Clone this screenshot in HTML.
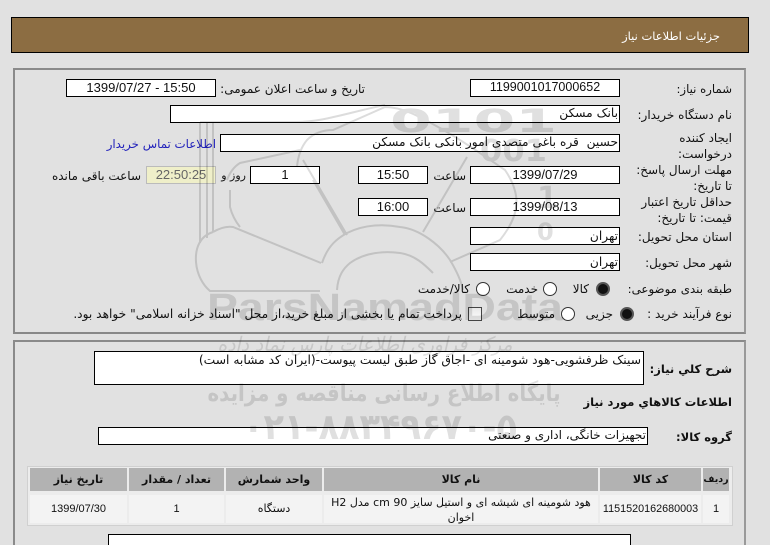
<!DOCTYPE html>
<html lang="fa"><head><meta charset="utf-8"><title>جزئیات اطلاعات نیاز</title>
<style>
html,body{margin:0;padding:0;width:770px;height:545px;overflow:hidden}
body{background:#e1e1e1;font-family:"DejaVu Sans","Liberation Sans",sans-serif;font-size:12px;color:#111}
#w{position:absolute;left:0;top:0;width:770px;height:545px;overflow:hidden;isolation:isolate;background:#e1e1e1}
.a{position:absolute;box-sizing:border-box;white-space:nowrap}
.p{position:absolute;box-sizing:border-box;border:2px solid #8a8a8a;border-right-color:#999;border-bottom-color:#888}
.i{position:absolute;box-sizing:border-box;height:18px;background:#fff;border:1px solid #000;line-height:15px;font-size:13px;text-align:center;white-space:nowrap;overflow:hidden;font-family:"Liberation Sans","DejaVu Sans",sans-serif;z-index:2}
.r{text-align:right;direction:rtl;padding-right:1px;font-family:"DejaVu Sans",sans-serif;font-size:12.2px}
.l{position:absolute;direction:rtl;text-align:right;white-space:nowrap;line-height:14px;z-index:2}
.rd{position:absolute;width:14px;height:14px;border-radius:50%;border:1px solid #333;background:#fff;box-sizing:border-box;z-index:2}
.rd.on{background:#111;box-shadow:inset 0 0 0 1px #111;border:2px solid #555}
.h,.c{position:absolute;box-sizing:border-box;text-align:center;z-index:2;white-space:nowrap}
.h{top:468px;height:23px;background:#b2b2b2;font-weight:bold;line-height:23px;font-size:11px}
.c{top:495px;height:28px;background:#f3f3f3;line-height:28px;font-size:11px}
.n{font-family:"Liberation Sans",sans-serif}
svg{position:absolute;left:0;top:0;z-index:5;mix-blend-mode:multiply}
</style></head>
<body><div id="w">
<div class="a" style="left:11px;top:17px;width:738px;height:36px;background:#8c6d42;border:1px solid #000"></div>
<div class="l" style="right:50px;top:29px;color:#fff;font-size:11.5px">جزئیات اطلاعات نیاز</div>

<div class="p" style="left:13px;top:68px;width:733px;height:266px"></div>
<div class="p" style="left:13px;top:340px;width:733px;height:215px"></div>

<svg width="770" height="545" viewBox="0 0 770 545">
<g fill="none" stroke="#dcdcdc" stroke-width="2">
<path d="M200 243V122M207 238V122M213 232V122"/>
<path d="M200 122H293C320 123 350 112 385 105"/>
<path d="M213 232C200 236 195 248 196 262C197 275 203 285 210 291H320"/>
<path d="M213 232C220 228 227 226 233 227L321 263"/>
<path d="M313 180L345 235"/>
<path d="M347 235L303 160"/>
<path d="M322 263C328 245 338 238 347 233C365 224 385 224 400 227C420 229 440 245 450 260C456 270 461 280 463 290"/>
<path d="M337 290C338 275 344 268 350 263C365 252 385 251 400 253C415 255 425 265 433 273"/>
<path d="M230 190V207C232 215 236 222 240 227M227 180C230 172 235 166 240 163L300 150"/>
<path d="M297 167C298 155 302 146 307 140C315 132 325 130 333 130L385 107C405 107 425 120 440 128C465 142 490 160 505 170C522 195 520 215 500 240L450 262"/>
<path d="M423 232L467 157"/>
</g>
<g fill="#e0e0e0" font-family="'DejaVu Sans',sans-serif" font-weight="bold">
<text x="390" y="132" font-size="32" textLength="167" lengthAdjust="spacingAndGlyphs">0101</text>
<text x="480" y="161" font-size="30" textLength="67" lengthAdjust="spacingAndGlyphs">001</text>
<text x="537" y="208" font-size="30">1</text>
<text x="537" y="240" font-size="24">0</text>
<text x="207" y="320" font-size="38" textLength="356" lengthAdjust="spacingAndGlyphs" font-family="'Liberation Sans',sans-serif">ParsNamadData</text>
<text x="384" y="401" font-size="23" text-anchor="middle" style="direction:rtl" textLength="353" lengthAdjust="spacingAndGlyphs">پایگاه اطلاع رسانی مناقصه و مزایده</text>
<text x="243" y="439" font-size="36" textLength="274" lengthAdjust="spacingAndGlyphs" style="direction:ltr;unicode-bidi:bidi-override">۰۲۱-۸۸۳۴۹۶۷۰-۵</text>
</g>
<text x="365" y="351" font-size="20" text-anchor="middle" fill="#e2e2e2" font-family="'DejaVu Sans',sans-serif" font-style="italic" style="direction:rtl" textLength="295" lengthAdjust="spacingAndGlyphs">مرکز فراوری اطلاعات پارس نماد داده</text>
</svg>

<div class="l" style="right:38px;top:82px;font-size:11.7px">شماره نیاز:</div>
<div class="i" style="left:470px;top:79px;width:150px;font-size:12.5px">1199001017000652</div>
<div class="l" style="right:405px;top:82px">تاریخ و ساعت اعلان عمومی:</div>
<div class="i" style="left:66px;top:79px;width:150px">1399/07/27 - 15:50</div>

<div class="l" style="right:38px;top:108px">نام دستگاه خریدار:</div>
<div class="i r" style="left:170px;top:105px;width:450px">بانک مسکن</div>

<div class="l" style="right:38px;top:130px;line-height:16px">ایجاد کننده<br>درخواست:</div>
<div class="i r" style="left:220px;top:134px;width:400px">حسین&nbsp; قره باغی متصدی امور بانکی بانک مسکن</div>
<div class="l" style="right:554px;top:137px;color:#2222bb;font-size:11.8px">اطلاعات تماس خریدار</div>

<div class="l" style="right:38px;top:162px;line-height:16px">مهلت ارسال پاسخ:<br>تا تاریخ:</div>
<div class="i" style="left:470px;top:166px;width:150px">1399/07/29</div>
<div class="l" style="right:304px;top:169px">ساعت</div>
<div class="i" style="left:358px;top:166px;width:70px">15:50</div>
<div class="i" style="left:250px;top:166px;width:70px">1</div>
<div class="l" style="right:524px;top:169px;font-size:11px">روز و</div>
<div class="i" style="left:146px;top:166px;width:70px;background:#efefc9;border-color:#bbb;color:#666">22:50:25</div>
<div class="l" style="right:629px;top:169px">ساعت باقی مانده</div>

<div class="l" style="right:38px;top:194px;line-height:16px">حداقل تاریخ اعتبار<br>قیمت: تا تاریخ:</div>
<div class="i" style="left:470px;top:198px;width:150px">1399/08/13</div>
<div class="l" style="right:304px;top:201px">ساعت</div>
<div class="i" style="left:358px;top:198px;width:70px">16:00</div>

<div class="l" style="right:38px;top:230px">استان محل تحویل:</div>
<div class="i r" style="left:470px;top:227px;width:150px;padding-top:1px">تهران</div>
<div class="l" style="right:38px;top:256px">شهر محل تحویل:</div>
<div class="i r" style="left:470px;top:253px;width:150px;padding-top:1px">تهران</div>

<div class="l" style="right:38px;top:282px;font-size:11.8px">طبقه بندی موضوعی:</div>
<div class="rd on" style="left:596px;top:282px"></div>
<div class="l" style="right:181px;top:282px">کالا</div>
<div class="rd" style="left:543px;top:282px"></div>
<div class="l" style="right:232px;top:282px">خدمت</div>
<div class="rd" style="left:476px;top:282px"></div>
<div class="l" style="right:300px;top:282px">کالا/خدمت</div>

<div class="l" style="right:38px;top:307px">نوع فرآیند خرید :</div>
<div class="rd on" style="left:620px;top:307px"></div>
<div class="l" style="right:157px;top:307px">جزیی</div>
<div class="rd" style="left:561px;top:307px"></div>
<div class="l" style="right:215px;top:307px">متوسط</div>
<div class="a" style="left:468px;top:307px;width:14px;height:14px;border:1px solid #444;background:linear-gradient(#e8e8e8,#fff);z-index:2"></div>
<div class="l" style="right:308px;top:307px;font-size:12.2px">پرداخت تمام یا بخشی از مبلغ خرید،از محل "اسناد خزانه اسلامی" خواهد بود.</div>

<div class="l" style="right:38px;top:362px;font-weight:bold;font-size:11.5px">شرح کلي نياز:</div>
<div class="i r" style="left:94px;top:351px;width:550px;height:34px;padding-right:2px;font-size:12.3px;line-height:17px">سینک ظرفشویی-هود شومینه ای -اجاق گاز طبق لیست پیوست-(ایران کد مشابه است)</div>
<div class="l" style="right:38px;top:395px;font-weight:bold;font-size:11.5px">اطلاعات کالاهاي مورد نياز</div>
<div class="l" style="right:38px;top:430px;font-weight:bold;font-size:11.5px">گروه کالا:</div>
<div class="i r" style="left:98px;top:427px;width:550px;font-size:12px">تجهیزات خانگی، اداری و صنعتی</div>

<div class="a" style="left:27px;top:466px;width:706px;height:60px;background:#ececec;border:1px solid #d0d0d0;z-index:1"></div>
<div class="h" style="left:703px;width:26px;font-size:9.5px">ردیف</div>
<div class="h" style="left:600px;width:101px">کد کالا</div>
<div class="h" style="left:324px;width:274px">نام کالا</div>
<div class="h" style="left:226px;width:96px">واحد شمارش</div>
<div class="h" style="left:129px;width:95px">تعداد / مقدار</div>
<div class="h" style="left:30px;width:97px">تاریخ نیاز</div>
<div class="c n" style="left:703px;width:26px;font-size:11px">1</div>
<div class="c n" style="left:600px;width:101px;font-size:10.8px">1151520162680003</div>
<div class="c" style="left:324px;width:274px;direction:rtl;line-height:15px;white-space:normal;font-size:11px;padding:0 4px">هود شومینه ای شیشه ای و استیل سایز 90 cm مدل H2 اخوان</div>
<div class="c" style="left:226px;width:96px">دستگاه</div>
<div class="c n" style="left:129px;width:95px;font-size:11px">1</div>
<div class="c n" style="left:30px;width:97px;font-size:11px">1399/07/30</div>

<div class="a" style="left:108px;top:534px;width:523px;height:30px;background:#fff;border:1px solid #000;z-index:2"></div>
</div></body></html>
